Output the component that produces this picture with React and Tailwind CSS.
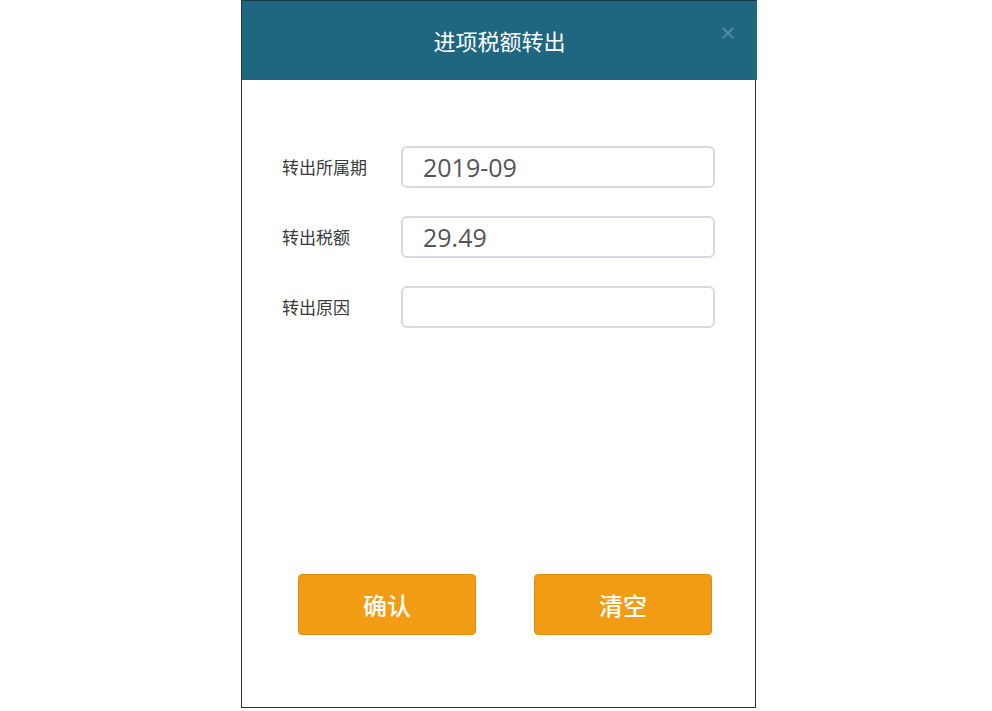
import { useState } from "react"

const Field = ({ label, value, setValue }) => {
  return (
    <div className="flex items-center h-[42px]">
      <label className="w-[119px] text-[17px] text-[#3a3a3a]">{label}</label>
      <input
        className="w-[314px] h-[42px] rounded-[6px] border-2 border-[#d8d8e0] px-[20px] text-[25px] text-[#555] outline-none"
        style={{ fontFamily: '"Open Sans", "Noto Sans CJK SC", sans-serif' }}
        value={value}
        onChange={(e) => setValue(e.target.value)}
      />
    </div>
  )
}

const App = () => {
  const [period, setPeriod] = useState("2019-09")
  const [amount, setAmount] = useState("29.49")
  const [reason, setReason] = useState("")

  const clearAll = () => {
    setPeriod("")
    setAmount("")
    setReason("")
  }

  return (
    <div className="w-[992px] h-[711px] bg-white" style={{ fontFamily: '"Noto Sans CJK SC", "Noto Sans", sans-serif' }}>
      {/* dialog */}
      <div className="ml-[241px] w-[515px] h-[708px] flex flex-col border-l border-r border-b border-[#333] bg-white">
        {/* header */}
        <div className="relative h-[80px] mr-[-2px] bg-[#1f6780] border-t border-[#1a3a45] flex items-center justify-center">
          <h1 className="text-[22px] text-white">进项税额转出</h1>
          <button className="absolute right-[19px] top-[22px] p-1">
            <svg width="12" height="12" viewBox="0 0 12 12">
              <path d="M1.5 1.5 L10.5 10.5 M10.5 1.5 L1.5 10.5" stroke="#4f8aa0" strokeWidth="2.2" strokeLinecap="round" />
            </svg>
          </button>
        </div>

        {/* form */}
        <div className="flex flex-col gap-[28px] pl-[40px] pt-[66px]">
          <Field label="转出所属期" value={period} setValue={setPeriod} />
          <Field label="转出税额" value={amount} setValue={setAmount} />
          <Field label="转出原因" value={reason} setValue={setReason} />
        </div>

        {/* buttons */}
        <div className="flex gap-[58px] pl-[56px] pt-[246px]">
          <button className="w-[178px] h-[61px] rounded-[4px] bg-[#f29c14] border border-[#de8f12] text-white text-[24px] font-medium">确认</button>
          <button className="w-[178px] h-[61px] rounded-[4px] bg-[#f29c14] border border-[#de8f12] text-white text-[24px] font-medium" onClick={clearAll}>清空</button>
        </div>
      </div>
    </div>
  )
}

export default App
